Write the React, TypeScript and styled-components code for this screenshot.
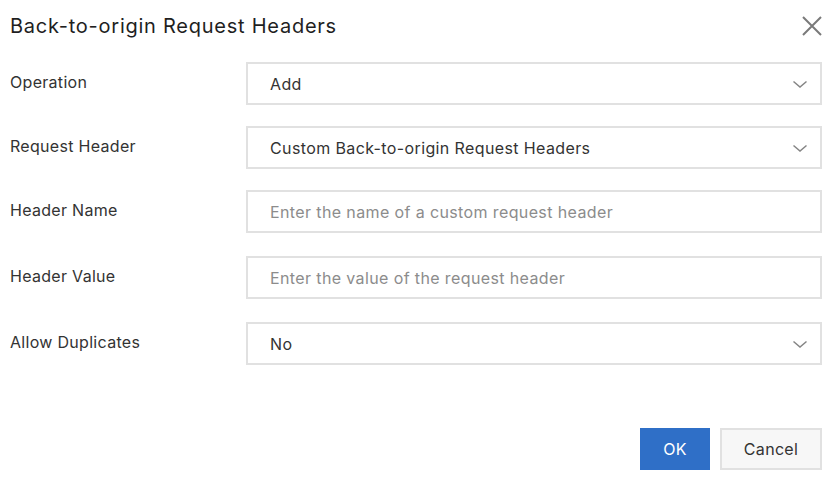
import React from "react";
import styled, { createGlobalStyle } from "styled-components";

const Global = createGlobalStyle`
  html, body { margin: 0; padding: 0; background: #ffffff; }
  body { font-family: Inter, "Helvetica Neue", Arial, sans-serif; color: #333; }
  * { box-sizing: border-box; }
`;

const Dialog = styled.div`
  width: 838px;
  height: 488px;
  padding: 12px 16px 0 10px;
  display: flex;
  flex-direction: column;
`;

const Header = styled.div`
  display: flex;
  align-items: center;
  justify-content: space-between;
  height: 28px;
`;

const Title = styled.h1`
  margin: 0;
  font-size: 20px;
  line-height: 28px;
  font-weight: 400;
  color: #1f1f1f;
  letter-spacing: 0.75px;
`;

const CloseButton = styled.button`
  width: 24px;
  height: 24px;
  padding: 0;
  margin-right: -2px;
  border: none;
  background: transparent;
  display: flex;
  align-items: center;
  justify-content: center;
  cursor: pointer;
`;

const Form = styled.div`
  margin-top: 22px;
  display: flex;
  flex-direction: column;
`;

const Row = styled.div<{ $gap: number }>`
  display: grid;
  grid-template-columns: 236px 1fr;
  align-items: start;
  margin-top: ${(p) => p.$gap}px;
`;

const Label = styled.div`
  padding-top: 8px;
  font-size: 16px;
  line-height: 24px;
  color: #333;
  letter-spacing: 0.3px;
`;

const Field = styled.div`
  height: 43px;
  border: 2px solid #e1e1e1;
  background: #fff;
  display: flex;
  align-items: center;
  padding: 0 12px 0 22px;
`;

const FieldText = styled.span<{ $placeholder?: boolean }>`
  flex: 1;
  font-size: 16px;
  color: ${(p) => (p.$placeholder ? "#8c8c8c" : "#333")};
  letter-spacing: 0.38px;
`;

const Footer = styled.div`
  margin-top: auto;
  margin-bottom: 18px;
  display: flex;
  justify-content: flex-end;
  gap: 10px;
`;

const Button = styled.button<{ $primary?: boolean }>`
  height: 42px;
  min-width: ${(p) => (p.$primary ? "70px" : "102px")};
  padding: 0 18px;
  font-family: inherit;
  font-size: 16px;
  letter-spacing: 0.3px;
  border: 2px solid ${(p) => (p.$primary ? "#2f6fc7" : "#e1e1e1")};
  background: ${(p) => (p.$primary ? "#2f6fc7" : "#f7f7f7")};
  color: ${(p) => (p.$primary ? "#fff" : "#333")};
  cursor: pointer;
`;

const Chevron = () => (
  <svg width="16" height="10" viewBox="0 0 16 10" fill="none">
    <path d="M1.5 2.5 L8 8 L14.5 2.5" stroke="#858585" strokeWidth="1.5" />
  </svg>
);

const CloseIcon = () => (
  <svg width="22" height="22" viewBox="0 0 22 22" fill="none">
    <path d="M2 2 L20 20 M20 2 L2 20" stroke="#7a7a7a" strokeWidth="2" />
  </svg>
);

const rows: { label: string; value: string; gap: number; placeholder?: boolean; select?: boolean }[] = [
  { label: "Operation", value: "Add", gap: 0, select: true },
  { label: "Request Header", value: "Custom Back-to-origin Request Headers", gap: 21, select: true },
  { label: "Header Name", value: "Enter the name of a custom request header", gap: 21, placeholder: true },
  { label: "Header Value", value: "Enter the value of the request header", gap: 23, placeholder: true },
  { label: "Allow Duplicates", value: "No", gap: 23, select: true },
];

export default function App() {
  return (
    <>
      <Global />
      <Dialog>
        <Header>
          <Title>Back-to-origin Request Headers</Title>
          <CloseButton aria-label="Close">
            <CloseIcon />
          </CloseButton>
        </Header>
        <Form>
          {rows.map((r) => (
            <Row key={r.label} $gap={r.gap}>
              <Label>{r.label}</Label>
              <Field>
                <FieldText $placeholder={r.placeholder}>{r.value}</FieldText>
                {r.select && <Chevron />}
              </Field>
            </Row>
          ))}
        </Form>
        <Footer>
          <Button $primary>OK</Button>
          <Button>Cancel</Button>
        </Footer>
      </Dialog>
    </>
  );
}
